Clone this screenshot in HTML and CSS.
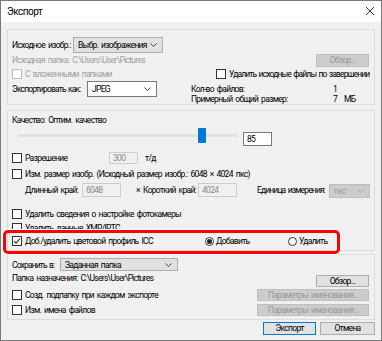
FILE: index.html
```html
<!DOCTYPE html>
<html lang="ru">
<head>
    <meta charset="UTF-8">
    <title>Экспорт</title>
    <link rel="stylesheet" href="styles.css">
</head>
<body>
    <div class="window">
        <div class="titlebar">
            <span class="title">Экспорт</span>
            <svg class="close" width="10" height="10" viewBox="0 0 10 10"><path d="M1 1L9 9M9 1L1 9" stroke="#333" stroke-width="1"/></svg>
        </div>

        <div class="content">
            <!-- источник -->
            <div class="group g1">
                <div class="row r1">
                    <span class="lbl w61">Исходное изобр.:</span>
                    <div class="combo w90"><span>Выбр. изображения</span><svg class="chev" width="7" height="4" viewBox="0 0 7 4"><path d="M0.5 0.5L3.5 3.5L6.5 0.5" fill="none" stroke="#444"/></svg></div>
                </div>
                <div class="row r2">
                    <span class="muted">Исходная папка: C:\Users\User\Pictures</span>
                    <button class="btn off w53 push">Обзор...</button>
                </div>
                <div class="row r3">
                    <label class="check off w204"><span class="box"></span>С вложенными папками</label>
                    <label class="check tight"><span class="box"></span>Удалить исходные файлы по завершении</label>
                </div>
                <div class="row r4">
                    <div class="left-export">
                        <span class="lbl w75 tight">Экспортировать как:</span>
                        <div class="combo w70 white"><span>JPEG</span><svg class="chev" width="7" height="4" viewBox="0 0 7 4"><path d="M0.5 0.5L3.5 3.5L6.5 0.5" fill="none" stroke="#444"/></svg></div>
                    </div>
                    <div class="stats">
                        <span>Кол-во файлов:</span><span>1</span><span></span>
                        <span>Примерный общий размер:</span><span>7</span><span>МБ</span>
                    </div>
                </div>
            </div>

            <!-- качество и размер -->
            <div class="group g2">
                <div class="row ra">Качество: Оптим. качество</div>
                <div class="row rs">
                    <div class="slider">
                        <div class="track"></div>
                        <div class="thumb" style="--v: 0.85"></div>
                    </div>
                    <div class="field w29 q">85</div>
                </div>
                <div class="row rr">
                    <label class="check w97"><span class="box"></span>Разрешение</label>
                    <div class="field off w29">300</div>
                    <span class="unit">т/д</span>
                </div>
                <div class="row rz">
                    <label class="check"><span class="box"></span>Изм. размер изобр. (Исходный размер изобр.: 6048 × 4024 пкс)</label>
                </div>
                <div class="row rd">
                    <span class="lbl w57">Длинный край:</span>
                    <div class="field off w39">6048</div>
                    <span class="times">×</span>
                    <span class="lbl w55">Короткий край:</span>
                    <div class="field off w39">4024</div>
                    <span class="lbl w72 ml20 tight">Единица измерения:</span>
                    <div class="combo off w41 unit-sel"><span>пкс</span><svg class="chev" width="7" height="4" viewBox="0 0 7 4"><path d="M0.5 0.5L3.5 3.5L6.5 0.5" fill="none" stroke="#aaa"/></svg></div>
                </div>
                <div class="row rc">
                    <label class="check"><span class="box"></span>Удалить сведения о настройке фотокамеры</label>
                </div>
                <div class="row rx">
                    <label class="check"><span class="box"></span>Удалить данные XMP/IPTC</label>
                </div>
                <div class="row ri">
                    <label class="check w193"><span class="box on"><svg width="8" height="8" viewBox="0 0 8 8"><path d="M1 4L3 6.2L7 1.5" fill="none" stroke="#222" stroke-width="1.1"/></svg></span>Доб./удалить цветовой профиль ICC</label>
                    <label class="radio w83"><span class="dot on"></span>Добавить</label>
                    <label class="radio"><span class="dot"></span>Удалить</label>
                </div>
            </div>

            <!-- сохранение -->
            <div class="group g3">
                <div class="row rv">
                    <span class="lbl w48 tight">Сохранить в:</span>
                    <div class="combo w118"><span>Заданная папка</span><svg class="chev" width="7" height="4" viewBox="0 0 7 4"><path d="M0.5 0.5L3.5 3.5L6.5 0.5" fill="none" stroke="#444"/></svg></div>
                </div>
                <div class="row rp">
                    <span class="dest">Папка назначения: C:\Users\User\Pictures</span>
                    <button class="btn w53 push">Обзор...</button>
                </div>
                <div class="row rn">
                    <label class="check"><span class="box"></span>Созд. подпапку при каждом экспорте</label>
                    <button class="btn off w112 push">Параметры именования...</button>
                </div>
                <div class="row rn">
                    <label class="check"><span class="box"></span>Изм. имена файлов</label>
                    <button class="btn off w112 push">Параметры именования...</button>
                </div>
            </div>

            <div class="footer">
                <button class="btn focus w53">Экспорт</button>
                <button class="btn w55">Отмена</button>
            </div>
        </div>

        <div class="mark"></div>
    </div>
</body>
</html>
```

FILE: styles.css
```css
* {
    box-sizing: border-box;
}
body {
    margin: 0;
    background: #f0f0f0;
    font-family: Roboto, 'Noto Sans', sans-serif;
    font-size: 8.5px;
    letter-spacing: -0.7px;
    word-spacing: 1.5px;
    color: #000;
}
.window {
    position: relative;
    width: 382px;
    height: 341px;
    border: 1px solid #7a7a7a;
    background: #f0f0f0;
    overflow: hidden;
}
.titlebar {
    height: 21px;
    background: #fff;
    display: flex;
    align-items: center;
    justify-content: space-between;
    padding: 0 6px 1px 6px;
    font-size: 10px;
    letter-spacing: -0.5px;
}
.content {
    padding: 7px 6px 0 6px;
}
.group {
    border: 1px solid #dcdcdc;
    padding: 0 5px 0 4px;
    display: flex;
    flex-direction: column;
}
.g1 {
    height: 76px;
    padding-top: 7px;
}
.g2 {
    height: 141px;
    margin-top: 5px;
    padding-top: 1px;
}
.g3 {
    height: 66px;
    margin-top: 3px;
    padding-top: 3px;
}
.row {
    display: flex;
    align-items: center;
    white-space: nowrap;
}
.push {
    margin-left: auto;
}
.lbl {
    flex: none;
}
.tight {
    letter-spacing: -0.85px;
    word-spacing: 1px;
}
.muted,
.off {
    color: #a0a0a0;
}

/* ширины */
.w29 { width: 29px; }
.w39 { width: 39px; }
.w41 { width: 41px; }
.w48 { width: 48px; }
.w53 { width: 53px; }
.w55 { width: 55px; }
.w57 { width: 57px; }
.w61 { width: 61px; }
.w70 { width: 70px; }
.w72 { width: 72px; }
.w75 { width: 75px; }
.w83 { width: 83px; }
.w90 { width: 90px; }
.w97 { width: 97px; }
.w112 { width: 112px; }
.w118 { width: 118px; }
.w193 { width: 193px; }
.w204 { width: 204px; }
.ml20 { margin-left: 20px; }

/* контролы */
.combo {
    flex: none;
    height: 16px;
    display: flex;
    align-items: center;
    justify-content: space-between;
    padding: 0 5px 0 4px;
    background: #e1e1e1;
    border: 1px solid #adadad;
}
.combo.white {
    background: #fff;
    border-color: #7a7a7a;
}
.combo.off {
    background: #cccccc;
    border-color: #bfbfbf;
}
.btn {
    flex: none;
    font: inherit;
    letter-spacing: inherit;
    word-spacing: inherit;
    height: 13px;
    padding: 0;
    background: #e1e1e1;
    border: 1px solid #adadad;
    color: #000;
    text-align: center;
    line-height: 11px;
}
.btn.off {
    background: #cccccc;
    border-color: #bfbfbf;
    color: #9a9a9a;
}
.btn.focus {
    border-color: #0078d7;
}
.field {
    flex: none;
    height: 14px;
    padding: 0 3px;
    line-height: 12px;
    background: #fff;
    border: 1px solid #7a7a7a;
}
.field.off {
    background: #f0f0f0;
    border-color: #cccccc;
    color: #8a8a8a;
}
.check,
.radio {
    flex: none;
    display: flex;
    align-items: center;
}
.box {
    flex: none;
    width: 10px;
    height: 10px;
    margin-right: 3px;
    background: #fff;
    border: 1px solid #333;
    display: flex;
    align-items: center;
    justify-content: center;
}
.check.off .box {
    border-color: #bcbcbc;
}
.dot {
    flex: none;
    width: 9px;
    height: 9px;
    margin-right: 2px;
    border: 1px solid #333;
    border-radius: 50%;
    background: #fff;
    display: flex;
    align-items: center;
    justify-content: center;
}
.dot.on::after {
    content: "";
    width: 5px;
    height: 5px;
    border-radius: 50%;
    background: #222;
}

/* группа 1 */
.r1 { height: 16px; }
.r2 { height: 14px; }
.r2 .btn { height: 13px; margin-top: 1px; }
.r3 { height: 14px; }
.r4 {
    align-items: flex-start;
}
.left-export {
    display: flex;
    align-items: center;
    width: 179px;
    height: 16px;
}
.stats {
    display: grid;
    grid-template-columns: 142px 11px auto;
    line-height: 10px;
    padding-top: 3px;
}

/* группа 2 */
.ra { height: 16px; }
.rs {
    height: 19px;
    align-items: flex-start;
}
.slider {
    position: relative;
    width: 221px;
    height: 15px;
    margin-left: 5px;
    display: flex;
    align-items: center;
}
.track {
    width: 100%;
    height: 3px;
    background: #e3e3e3;
}
.thumb {
    position: absolute;
    top: 0;
    left: calc((100% - 8px) * var(--v));
    width: 8px;
    height: 15px;
    background: #0078d7;
    border-radius: 1px;
}
.field.q {
    margin-top: 4px;
    margin-left: 5px;
}
.rr {
    height: 16px;
    margin-top: 3px;
}
.rr .field { height: 12px; line-height: 10px; }
.unit {
    margin-left: 7px;
}
.rz { height: 16px; }
.rd {
    height: 15px;
    padding-left: 13px;
}
.times {
    flex: none;
    width: 22px;
    padding-left: 15px;
}
.unit-sel {
    height: 14px;
    align-self: flex-start;
    margin-top: 2px;
}
.rc {
    height: 14px;
    margin-top: 10px;
}
.rx { height: 13px; }
.ri { height: 14px; }

/* группа 3 */
.rv { height: 13px; }
.rv .combo { height: 13px; }
.rp {
    height: 16px;
    align-items: flex-start;
}
.dest { line-height: 14px; }
.rp .btn {
    height: 12px;
    align-self: flex-end;
}
.rn { height: 15px; }
.rn .btn { height: 12px; }

.footer {
    display: flex;
    justify-content: flex-end;
    gap: 4px;
    margin-top: 2px;
}

/* красная рамка-пометка поверх диалога */
.mark {
    position: absolute;
    left: 2px;
    top: 229px;
    width: 337px;
    height: 24px;
    border: 3px solid #f00;
    border-radius: 5px;
    box-shadow: 0 0 0 1px #fff;
}
```
